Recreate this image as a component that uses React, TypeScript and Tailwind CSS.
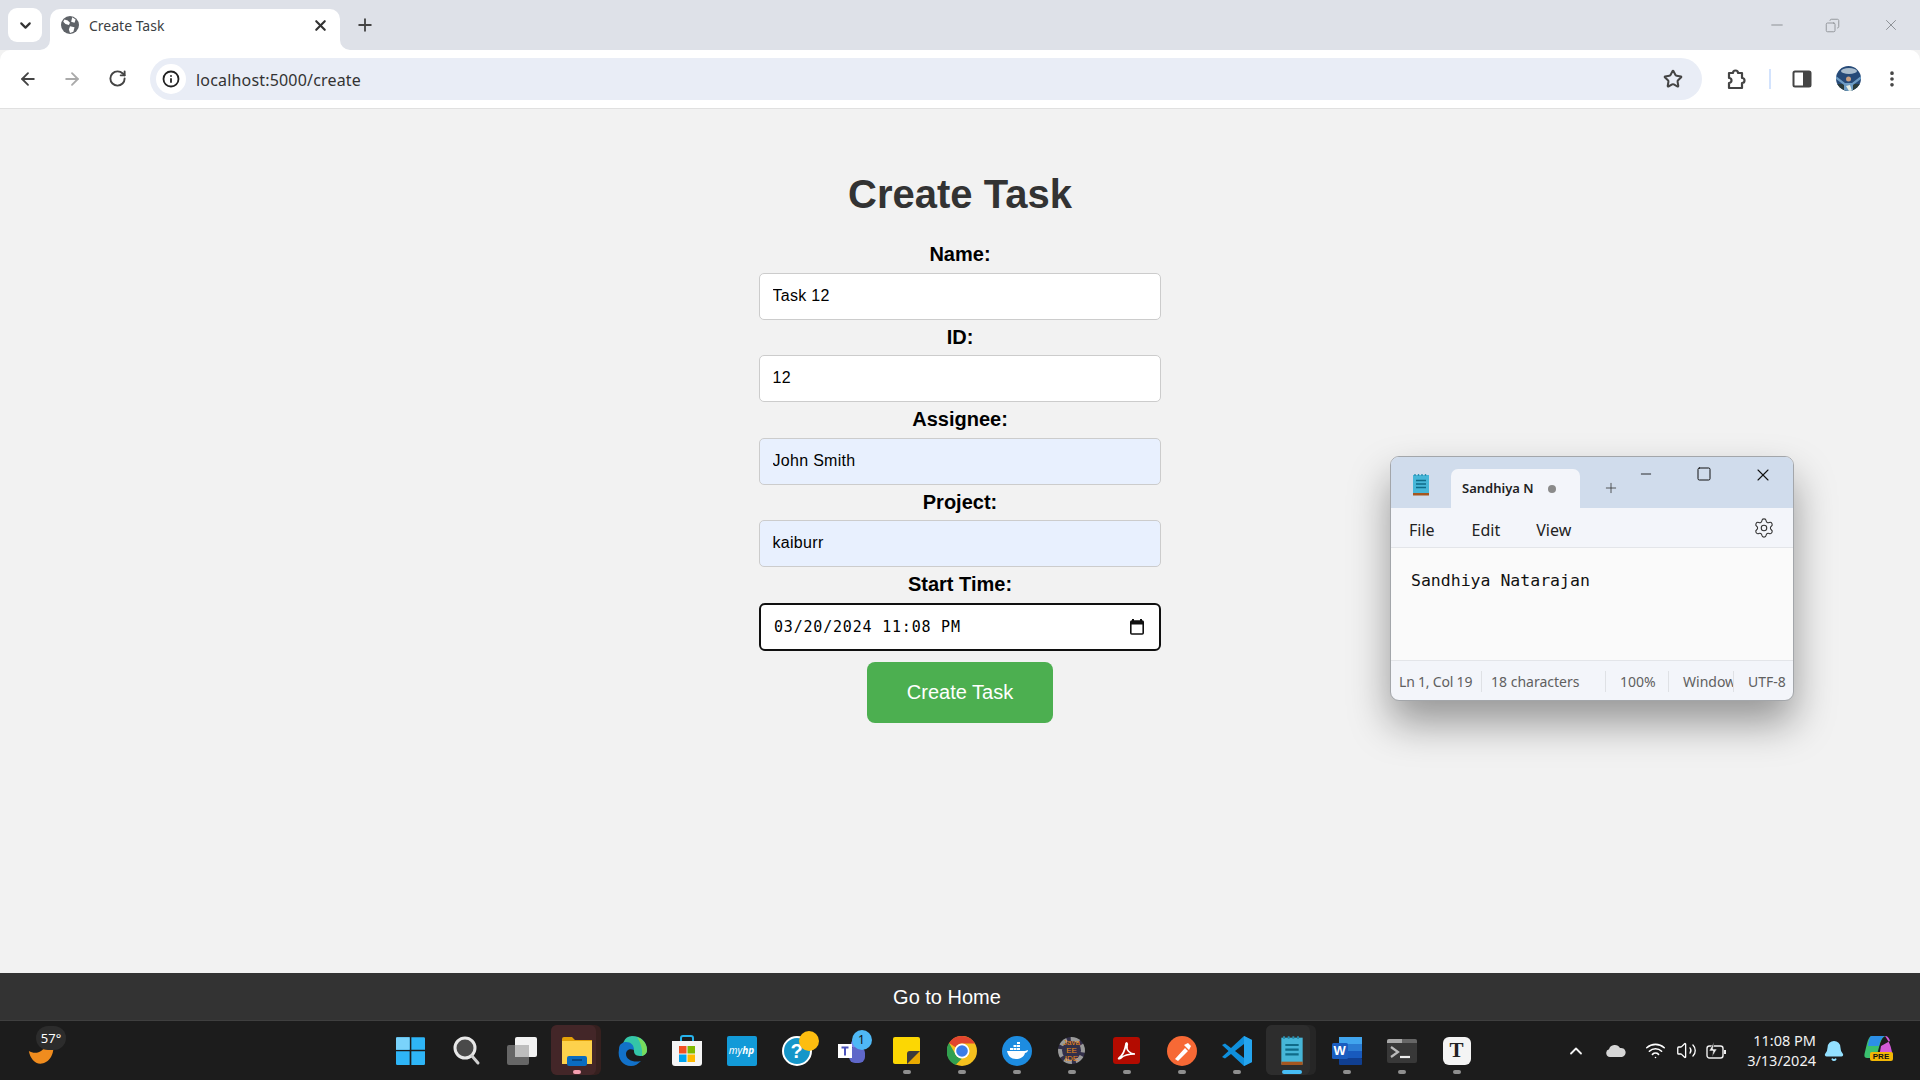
import type { ReactNode } from "react";
import {
  ArrowLeft,
  ArrowRight,
  Bell,
  ChevronDown,
  ChevronUp,
  Copy,
  Info,
  Minus,
  MoreVertical,
  Plus,
  RotateCw,
  Settings,
  Square,
  Star,
  Volume2,
  Wifi,
  X,
} from "lucide-react";

type Field = { label: string; value: string; filled?: boolean };

const fields: Field[] = [
  { label: "Name:", value: "Task 12" },
  { label: "ID:", value: "12" },
  { label: "Assignee:", value: "John Smith", filled: true },
  { label: "Project:", value: "kaiburr", filled: true },
];

const Globe = () => (
  <svg width="18" height="18" viewBox="0 0 16 16">
    <circle cx="8" cy="8" r="8" fill="#5f6368" />
    <path d="M3 3l3 1 2 2-1 2-3-1-2-2zM10 1l3 2-1 3-3-1zM8 9l4 1-1 4-3 1-1-3z" fill="#fff" />
  </svg>
);

const Avatar = () => (
  <svg width="25" height="25" viewBox="0 0 25 25">
    <defs>
      <clipPath id="avatar">
        <circle cx="12.5" cy="12.5" r="12.5" />
      </clipPath>
    </defs>
    <g clipPath="url(#avatar)">
      <rect width="25" height="25" fill="#264a78" />
      <ellipse cx="13" cy="5" rx="8" ry="3" fill="#a9bccd" />
      <rect y="18" width="25" height="7" fill="#2a3b3a" />
      <path d="M0 10l9 7h7l9-7v3l-8 6v6H8v-6l-8-6z" fill="#6d9cc4" />
      <circle cx="12.5" cy="13" r="2.5" fill="#c99f80" />
      <path d="M10 20l3 5h3l-2-6z" fill="#e7efe4" />
    </g>
  </svg>
);

const FlareLeft = () => (
  <svg className="absolute bottom-0 -left-[10px]" width="10" height="10" viewBox="0 0 10 10">
    <path d="M10 0v10H0a10 10 0 0 0 10-10z" fill="#fff" />
  </svg>
);

const FlareRight = () => (
  <svg className="absolute bottom-0 -right-[10px]" width="10" height="10" viewBox="0 0 10 10">
    <path d="M0 0v10h10A10 10 0 0 1 0 0z" fill="#fff" />
  </svg>
);

const BrowserChrome = () => (
  <>
    <div className="h-[50px] bg-[#dee1e8] flex items-end shrink-0 relative">
      <div className="self-start mt-[8px] ml-[8px] w-[34px] h-[34px] bg-white rounded-[9px] flex items-center justify-center">
        <ChevronDown size={17} strokeWidth={3} color="#333" />
      </div>
      <div className="ml-[8px] w-[290px] h-[41px] bg-white rounded-t-[10px] relative flex items-center pl-[11px] pr-[11px] pb-[9px]">
        <FlareLeft />
        <FlareRight />
        <Globe />
        <span className="ml-[10px] flex-1 text-[14px] text-[#3c4043] font-['Noto_Sans',sans-serif]">Create Task</span>
        <X size={17} strokeWidth={3} color="#333" />
      </div>
      <div className="ml-[15px] self-start mt-[15px]">
        <Plus size={20} strokeWidth={2.2} color="#444" />
      </div>
      <div className="ml-auto self-start mt-[16px] flex items-center pr-[20px] text-[#8c8f94]">
        <Minus size={18} strokeWidth={1.3} />
        <Copy size={15} strokeWidth={1.4} className="ml-[39px] -scale-x-100" />
        <X size={18} strokeWidth={1.3} className="ml-[42px]" />
      </div>
    </div>
    <div className="h-[59px] bg-white border-b border-[#e0e0e0] rounded-t-[10px] flex items-center shrink-0 pb-[1px]">
      <div className="flex items-center gap-[24px] pl-[18px] w-[150px] shrink-0">
        <ArrowLeft size={20} strokeWidth={2.2} color="#444" />
        <ArrowRight size={20} strokeWidth={2.2} color="#aaa" />
        <RotateCw size={19} strokeWidth={2.4} color="#444" className="ml-[2px]" />
      </div>
      <div className="w-[1552px] h-[42px] bg-[#e9edf6] rounded-full flex items-center pl-[6px] pr-[19px] shrink-0">
        <div className="w-[30px] h-[30px] rounded-full bg-white flex items-center justify-center">
          <Info size={18} strokeWidth={2.4} color="#222" />
        </div>
        <span className="ml-[10px] pt-[2px] flex-1 text-[16px] text-[#333] font-['Noto_Sans',sans-serif] tracking-[0.18px]">localhost:5000/create</span>
        <Star size={20} strokeWidth={2.4} color="#444" />
      </div>
      <svg className="ml-[24px]" width="22" height="22" viewBox="0 0 22 22">
        <path d="M3 5h4a2.5 2.5 0 0 1 5 0h4v5a2.5 2.5 0 0 1 0 5v5H3v-5a2.5 2.5 0 0 0 0-5z" fill="none" stroke="#444" strokeWidth="2.2" strokeLinejoin="round" />
      </svg>
      <div className="ml-[21px] w-[2px] h-[20px] bg-[#d3e3fd]" />
      <svg className="ml-[21px]" width="20" height="20" viewBox="0 0 20 20">
        <rect x="1.5" y="2.5" width="17" height="15" rx="1.5" fill="none" stroke="#444" strokeWidth="2" />
        <rect x="11" y="2.5" width="7.5" height="15" fill="#444" />
      </svg>
      <div className="ml-[24px]">
        <Avatar />
      </div>
      <div className="ml-[21px]">
        <MoreVertical size={20} strokeWidth={2.4} color="#444" />
      </div>
    </div>
  </>
);

const labelClass = "text-[20px] leading-[23px] font-bold text-black text-center pt-[6px] pb-[6.5px]";
const inputClass = "w-full h-[47px] border border-[#ccc] rounded-[5px] pl-[12.5px] pb-[1px] text-[16px] tracking-[0.3px] text-black outline-none";

const TaskForm = () => (
  <form className="w-[402px] mx-auto pt-[62px] font-['Liberation_Sans',sans-serif] flex flex-col">
    <h1 className="text-[40px] leading-[46px] font-bold text-[#333] text-center mb-[20px]">Create Task</h1>
    {fields.map((field) => (
      <div key={field.label} className="flex flex-col">
        <label className={labelClass}>{field.label}</label>
        <input readOnly value={field.value} className={`${inputClass} ${field.filled ? "bg-[#e8f0fe]" : "bg-white"}`} />
      </div>
    ))}
    <label className={labelClass}>Start Time:</label>
    <div className="w-full h-[48px] bg-white border-[2.5px] border-[#101010] rounded-[6px] pl-[13px] pr-[15px] flex items-center justify-between text-black">
      <span className="pt-[1px] text-[15px] tracking-[0.8px] whitespace-pre font-['DejaVu_Sans_Mono',monospace]">03/20/2024 11:08 PM</span>
      <svg width="14" height="16" viewBox="0 0 14 16">
        <path d="M3 0v2M11 0v2" stroke="#111" strokeWidth="2" />
        <rect x="0.8" y="2" width="12.4" height="13" rx="1" fill="none" stroke="#111" strokeWidth="1.6" />
        <rect x="0.8" y="2" width="12.4" height="3.5" fill="#111" />
      </svg>
    </div>
    <button type="button" className="mt-[11.5px] self-center w-[186px] h-[61px] pb-[2px] bg-[#4caf50] rounded-[8px] text-white text-[20px]">
      Create Task
    </button>
  </form>
);

const NotepadGlyph = ({ size }: { size: number }) => (
  <svg width={size} height={size} viewBox="0 0 24 24">
    <rect x="4" y="2" width="16" height="20" fill="#46b6d8" />
    <rect x="4" y="20" width="16" height="2.5" fill="#a5561f" />
    <path d="M7 7.5h10M7 11h10M7 14.5h10" stroke="#0f6b88" strokeWidth="1.6" />
    <path d="M6 1v2M9.5 1v2M13 1v2M16.5 1v2" stroke="#2a8fb0" strokeWidth="1.4" />
  </svg>
);

const Notepad = () => (
  <div className="absolute left-[1390px] top-[347px] w-[404px] h-[245px] rounded-[9px] border border-[#a3a6aa] overflow-hidden flex flex-col shadow-[0_22px_40px_rgba(0,0,0,0.38)] font-['Noto_Sans',sans-serif] bg-[#f3f5fa]">
    <div className="h-[51px] bg-[#d0dcec] flex shrink-0">
      <div className="w-[60px] pl-[18px] pt-[16px]">
        <NotepadGlyph size={24} />
      </div>
      <div className="mt-[12px] w-[129px] h-[39px] bg-[#f3f5fa] rounded-t-[7px] flex items-center pl-[11px]">
        <span className="w-[71px] overflow-hidden whitespace-nowrap text-[13px] font-semibold text-[#222]">Sandhiya Natarajan</span>
        <span className="ml-[15px] w-[8px] h-[8px] rounded-full bg-[#8a8a8a]" />
      </div>
      <div className="ml-[23px] mt-[23px]">
        <Plus size={16} strokeWidth={1.2} color="#333" />
      </div>
      <div className="ml-[19px] mt-[9px]">
        <Minus size={16} strokeWidth={1.3} color="#111" />
      </div>
      <div className="ml-[42px] mt-[9px]">
        <Square size={16} strokeWidth={1.5} color="#111" />
      </div>
      <div className="ml-[41px] mt-[8px]">
        <X size={20} strokeWidth={1.3} color="#111" />
      </div>
    </div>
    <div className="h-[40px] flex items-center border-b border-[#e3e5e9] text-[16px] text-[#222] shrink-0 pt-[4px]">
      <span className="ml-[18px]">File</span>
      <span className="ml-[37px]">Edit</span>
      <span className="ml-[36px]">View</span>
      <Settings size={22} strokeWidth={1.2} color="#333" className="ml-auto mr-[18px] -mt-[4px]" />
    </div>
    <div className="flex-1 bg-[#fafafa] pl-[20px] pt-[22px] text-[16.5px] leading-[22px] text-[#111] font-['DejaVu_Sans_Mono',monospace] whitespace-nowrap">
      Sandhiya Natarajan
    </div>
    <div className="h-[40px] border-t border-[#e3e5e9] flex items-center text-[14px] text-[#606060] shrink-0 pt-[2px]">
      <span className="pl-[8px] w-[91px] border-r border-[#dfe1e5] whitespace-nowrap tracking-[-0.2px]">Ln 1, Col 19</span>
      <span className="pl-[9px] w-[124px] border-r border-[#dfe1e5] whitespace-nowrap">18 characters</span>
      <span className="pl-[14px] w-[63px] border-r border-[#dfe1e5]">100%</span>
      <span className="pl-[14px] w-[65px] overflow-hidden border-r border-[#dfe1e5] whitespace-nowrap">Windows (CRLF)</span>
      <span className="pl-[14px] whitespace-nowrap">UTF-8</span>
    </div>
  </div>
);

const slotClass = "w-[55px] h-full relative flex items-center justify-center shrink-0";

const TaskIcon = ({
  children,
  dot,
  active,
}: {
  children: ReactNode;
  dot?: "gray" | "pink" | "blue";
  active?: "red" | "gray";
}) => (
  <div className={slotClass}>
    {active === "red" && (
      <>
        <div className="absolute left-[1.5px] top-[4px] w-[50px] h-[50px] rounded-[6px] bg-[#36201f]" />
        <div className="absolute left-[1.5px] top-[4px] w-[45px] h-[50px] rounded-[6px] bg-[#432628]" />
      </>
    )}
    {active === "gray" && (
      <>
        <div className="absolute left-[1.5px] top-[4px] w-[50px] h-[50px] rounded-[6px] bg-[#262626]" />
        <div className="absolute left-[1.5px] top-[4px] w-[44px] h-[50px] rounded-[6px] bg-[#2d2d2d]" />
      </>
    )}
    <div className="relative">{children}</div>
    {dot === "gray" && <div className="absolute bottom-[6px] left-[23.5px] w-[8px] h-[4px] rounded-full bg-[#8f8f8f]" />}
    {dot === "pink" && <div className="absolute bottom-[6px] left-[23.5px] w-[8px] h-[4px] rounded-full bg-[#f59fb0]" />}
    {dot === "blue" && <div className="absolute bottom-[6px] left-[17.5px] w-[20px] h-[4px] rounded-full bg-[#47bdf5]" />}
  </div>
);

const Taskbar = () => (
  <div className="h-[59px] bg-[#1c1c1c] flex items-center shrink-0 font-['Noto_Sans',sans-serif]">
    <div className="w-[384px] h-full relative shrink-0">
      <svg className="absolute left-[27px] top-[22px]" width="29" height="23" viewBox="0 0 22 20">
        <path d="M0 7c5 3 13 2 15-7h6c2 10-4 18-11 18C5 18 1 13 0 7z" fill="#f08c1e" />
      </svg>
      <div className="absolute left-[36px] top-[5px] w-[30px] h-[24px] rounded-full bg-[#2c2c2c] text-white text-[13px] leading-[24px] text-center">57°</div>
    </div>
    <div className="flex h-full">
      <TaskIcon>
        <svg className="-ml-[2px]" width="29" height="29" viewBox="0 0 24 24">
          <path d="M1 1h10.3v10.3H0V2a1 1 0 0 1 1-1zM12.7 1H23a1 1 0 0 1 1 1v9.3H12.7zM0 12.7h11.3V24H1a1 1 0 0 1-1-1zM12.7 12.7H24V23a1 1 0 0 1-1 1H12.7z" fill="#2eb5f7" />
          <path d="M1 1h10.3v10.3H0V2a1 1 0 0 1 1-1z" fill="#7ad3fb" />
        </svg>
      </TaskIcon>
      <TaskIcon>
        <svg width="28" height="30" viewBox="0 0 28 30">
          <circle cx="12" cy="12" r="10" fill="#4a4a4a" stroke="#e8e8e8" strokeWidth="3" />
          <path d="M19 20l6 7" stroke="#cfcfcf" strokeWidth="3" strokeLinecap="round" />
        </svg>
      </TaskIcon>
      <TaskIcon>
        <svg width="30" height="29" viewBox="0 0 30 29">
          <rect x="0" y="9" width="22" height="20" rx="2" fill="#666" />
          <rect x="8" y="1" width="22" height="20" rx="2" fill="#f2f2f2" />
          <rect x="8" y="9" width="14" height="12" fill="#bdbdbd" />
        </svg>
      </TaskIcon>
      <TaskIcon active="red" dot="pink">
        <svg width="30" height="30" viewBox="0 0 30 30">
          <path d="M0 3a2 2 0 0 1 2-2h8l3 3h17v22H0z" fill="#e3a008" />
          <path d="M0 5h30v23H0z" fill="#fdd14c" />
          <rect x="5" y="20" width="20" height="10" rx="2" fill="#0a6cc0" />
          <path d="M10 24h10" stroke="#053a6b" strokeWidth="1.4" />
        </svg>
      </TaskIcon>
      <TaskIcon>
        <svg width="30" height="30" viewBox="0 0 30 30">
          <path d="M15 0c9 0 15 6 15 14 0 4-3 6-7 6-5 0-6-3-6-5 0-3-3-4-5-4-4 0-6 3-6 7-2-9 1-18 9-18z" fill="#34c6a8" />
          <path d="M2 13c0-5 4-7 7-7 5 0 8 3 8 8-4-2-8 0-8 4 0 6 8 9 15 7-3 3-6 5-10 5C6 30 0 23 2 13z" fill="#1271c9" />
          <path d="M20 1c6 2 10 7 10 13 0 3-2 5-5 6 1-7-2-15-5-19z" fill="#78dc5c" />
        </svg>
      </TaskIcon>
      <TaskIcon>
        <svg width="30" height="32" viewBox="0 0 30 32">
          <path d="M9 6V3a2 2 0 0 1 2-2h8a2 2 0 0 1 2 2v3" fill="none" stroke="#27b3ec" strokeWidth="2" />
          <path d="M0 6h30v22a3 3 0 0 1-3 3H3a3 3 0 0 1-3-3z" fill="#f5f5f5" />
          <rect x="7" y="11" width="7.5" height="7.5" fill="#f25022" />
          <rect x="15.5" y="11" width="7.5" height="7.5" fill="#7fba00" />
          <rect x="7" y="19.5" width="7.5" height="7.5" fill="#00a4ef" />
          <rect x="15.5" y="19.5" width="7.5" height="7.5" fill="#ffb900" />
        </svg>
      </TaskIcon>
      <TaskIcon>
        <div className="w-[30px] h-[30px] rounded-[2px] bg-[#129ad8] flex items-center justify-center text-white text-[10px] italic whitespace-nowrap">
          my<span className="font-bold">hp</span>
        </div>
      </TaskIcon>
      <TaskIcon>
        <div className="w-[30px] h-[30px] rounded-full bg-[#1596c9] border-2 border-white flex items-center justify-center text-white font-bold text-[20px] leading-none font-['Liberation_Sans',sans-serif]">?</div>
        <div className="absolute -right-[7px] -top-[5px] w-[20px] h-[20px] rounded-full bg-[#fdbd10]" />
      </TaskIcon>
      <TaskIcon>
        <svg width="28" height="26" viewBox="0 0 28 26">
          <circle cx="18" cy="6" r="5" fill="#7b83eb" />
          <rect x="11" y="9" width="16" height="16" rx="6" fill="#5f67c9" />
          <rect x="0" y="6" width="14" height="14" fill="#fff" />
          <path d="M3.5 9.5h7M7 9.5v8" stroke="#4b53bc" strokeWidth="2" />
        </svg>
        <div className="absolute -right-[6px] -top-[8px] w-[20px] h-[20px] rounded-full bg-[#4fb8f5] text-[#111] text-[12px] leading-[20px] text-center">1</div>
      </TaskIcon>
      <TaskIcon dot="gray">
        <svg width="27" height="27" viewBox="0 0 27 27">
          <rect width="27" height="27" rx="2" fill="#fcd703" />
          <path d="M14 27V17a3 3 0 0 1 3-3h10v11a2 2 0 0 1-2 2z" fill="#e8a900" />
          <path d="M14 27V17a3 3 0 0 1 3-3h10z" fill="#3b3b3b" />
        </svg>
      </TaskIcon>
      <TaskIcon dot="gray">
        <svg width="30" height="30" viewBox="0 0 30 30">
          <circle cx="15" cy="15" r="15" fill="#f4c01e" />
          <path d="M15 0a15 15 0 0 1 13 7.5H15a7.5 7.5 0 0 0-6.5 3.75L2 7A15 15 0 0 1 15 0z" fill="#e2452f" />
          <path d="M2 7l6.5 11.25A7.5 7.5 0 0 0 15 22.5L8.5 29A15 15 0 0 1 2 7z" fill="#31a04f" />
          <circle cx="15" cy="15" r="7.5" fill="#fff" />
          <circle cx="15" cy="15" r="5.8" fill="#3b7de8" />
        </svg>
      </TaskIcon>
      <TaskIcon dot="gray">
        <svg width="30" height="30" viewBox="0 0 30 30">
          <circle cx="15" cy="15" r="15" fill="#1d8ce0" />
          <path d="M5 15h18c1 0 2-1 3-1 0 2-2 3-3 3-1 4-5 6-9 6-5 0-8-3-9-8z" fill="#fff" />
          <path d="M8 12h3v2H8zM11.5 12h3v2h-3zM15 12h3v2h-3zM11.5 9h3v2h-3zM15 9h3v2h-3zM15 6h3v2h-3z" fill="#fff" />
        </svg>
      </TaskIcon>
      <TaskIcon dot="gray">
        <div className="w-[27px] h-[27px] rounded-full border-[4px] border-dashed border-[#9a9a9a] bg-[#33304a] flex items-center justify-center text-center text-[#ef8a17] text-[8px] leading-[8px] font-['Liberation_Sans',sans-serif]">
          Java EE IDE
        </div>
      </TaskIcon>
      <TaskIcon dot="gray">
        <div className="w-[27px] h-[27px] rounded-[3px] bg-[#b30b00] flex items-center justify-center">
          <svg width="20" height="20" viewBox="0 0 20 20">
            <path d="M2 17c3-2 6-8 7-14 0-2 2-1 1 2-1 4 3 8 8 8-4 0-11 1-14 4-2 1-3 1-2 0z" fill="none" stroke="#fff" strokeWidth="1.7" />
          </svg>
        </div>
      </TaskIcon>
      <TaskIcon dot="gray">
        <svg width="30" height="30" viewBox="0 0 30 30">
          <circle cx="15" cy="15" r="15" fill="#f76935" />
          <path d="M8 23l10-11 3 3-10 10zM17 9l4-2 3 3-2 4z" fill="#fff" />
        </svg>
      </TaskIcon>
      <TaskIcon dot="gray">
        <svg width="30" height="30" viewBox="0 0 30 30">
          <path d="M22 0l8 4v22l-8 4-13-12-6 4.5L0 21l6.5-6L0 9l3-1.5L9 12z" fill="#0f8fdc" />
          <path d="M22 8v14l-9-7z" fill="#1c1c1c" />
          <path d="M22 0l8 4v22l-8 4z" fill="#25a5ef" />
        </svg>
      </TaskIcon>
      <TaskIcon active="gray" dot="blue">
        <NotepadGlyph size={32} />
      </TaskIcon>
      <TaskIcon dot="gray">
        <svg width="30" height="30" viewBox="0 0 30 30">
          <rect x="7" y="1" width="23" height="7" fill="#41a5ee" />
          <rect x="7" y="8" width="23" height="7" fill="#2b7cd3" />
          <rect x="7" y="15" width="23" height="7" fill="#185abd" />
          <rect x="7" y="22" width="23" height="7" rx="1" fill="#103f91" />
          <rect x="0" y="7" width="16" height="16" rx="1.5" fill="#1a5dc0" />
        </svg>
        <span className="absolute left-[2px] top-[7px] w-[12px] text-center text-white font-bold text-[13px] leading-[16px] font-['Liberation_Sans',sans-serif]">W</span>
      </TaskIcon>
      <TaskIcon dot="gray">
        <svg width="30" height="24" viewBox="0 0 30 24">
          <rect width="30" height="24" rx="2" fill="#383838" />
          <path d="M0 2a2 2 0 0 1 2-2h13v4H0z" fill="#a8a8a8" />
          <path d="M15 0h13a2 2 0 0 1 2 2v2H15z" fill="#666" />
          <path d="M4 8l7 5-7 5" fill="none" stroke="#bbb" strokeWidth="2.2" />
          <path d="M13 18h10" stroke="#eee" strokeWidth="2.2" />
        </svg>
      </TaskIcon>
      <TaskIcon dot="gray">
        <div className="w-[28px] h-[28px] rounded-[6px] bg-[#f4f4f4] flex items-center justify-center text-[#222] font-bold text-[21px] leading-none font-['Liberation_Serif',serif]">T</div>
      </TaskIcon>
    </div>
    <div className="ml-[82px] flex items-center h-full text-white">
      <ChevronUp size={20} strokeWidth={2.2} color="#f2f2f2" />
      <svg className="ml-[20px]" width="20" height="14" viewBox="0 0 20 14">
        <path d="M4 13a4 4 0 0 1-1-7.8A6 6 0 0 1 14 4a4.5 4.5 0 0 1 2 9z" fill="#d6d6d6" />
      </svg>
      <Wifi size={21} strokeWidth={1.8} className="ml-[19px]" />
      <Volume2 size={21} strokeWidth={1.5} className="ml-[10px]" />
      <svg className="ml-[9px]" width="21" height="18" viewBox="0 0 21 18">
        <rect x="1" y="4" width="16" height="12" rx="2.5" fill="none" stroke="#f0f0f0" strokeWidth="1.4" />
        <rect x="18" y="8" width="2" height="4" fill="#f0f0f0" />
        <path d="M8 0L3 9h4l-1 6 5-8H7z" fill="#f0f0f0" stroke="#1c1c1c" strokeWidth="0.6" />
      </svg>
      <div className="ml-[20px] w-[69px] text-right text-[14.5px] leading-[20px] text-[#f2f2f2] whitespace-nowrap -mt-[2px]">
        <div>11:08 PM</div>
        <div>3/13/2024</div>
      </div>
      <Bell size={22} fill="#93e0ff" color="#93e0ff" className="ml-[7px]" />
      <div className="ml-[18.5px] relative w-[30px] h-[30px] mt-[-1px]">
        <svg width="30" height="26" viewBox="0 0 30 26">
          <path d="M8 1h13c-4 2-5 8-7 15-1 4-3 7-7 7H3c-3 0-3-3-2-6C3 9 4 1 8 1z" fill="#3ac06e" />
          <path d="M8 1h13c-4 2-5 6-6 10H4C5 6 5 1 8 1z" fill="#2c8fe8" />
          <path d="M14 23h11c3 0 4-3 3-6-1-5-2-9-7-16 3 0 4 2 5 5l-9 5c-1 5-1 9-3 12z" fill="#d35bd8" />
        </svg>
        <div className="absolute left-[6px] top-[17px] w-[23px] h-[9px] rounded-[2px] bg-[#f2b705] text-[#111] text-[8px] leading-[9px] font-bold text-center font-['Liberation_Sans',sans-serif]">PRE</div>
      </div>
    </div>
  </div>
);

export default function App() {
  return (
    <div className="w-[1920px] h-[1080px] overflow-hidden flex flex-col bg-[#f2f2f2]">
      <BrowserChrome />
      <main className="flex-1 relative">
        <TaskForm />
        <Notepad />
      </main>
      <div className="h-[48px] bg-[#333] border-b border-[#3f3f3f] flex items-center justify-center pr-[26px] shrink-0 text-white text-[20px] font-['Liberation_Sans',sans-serif]">
        Go to Home
      </div>
      <Taskbar />
    </div>
  );
}
